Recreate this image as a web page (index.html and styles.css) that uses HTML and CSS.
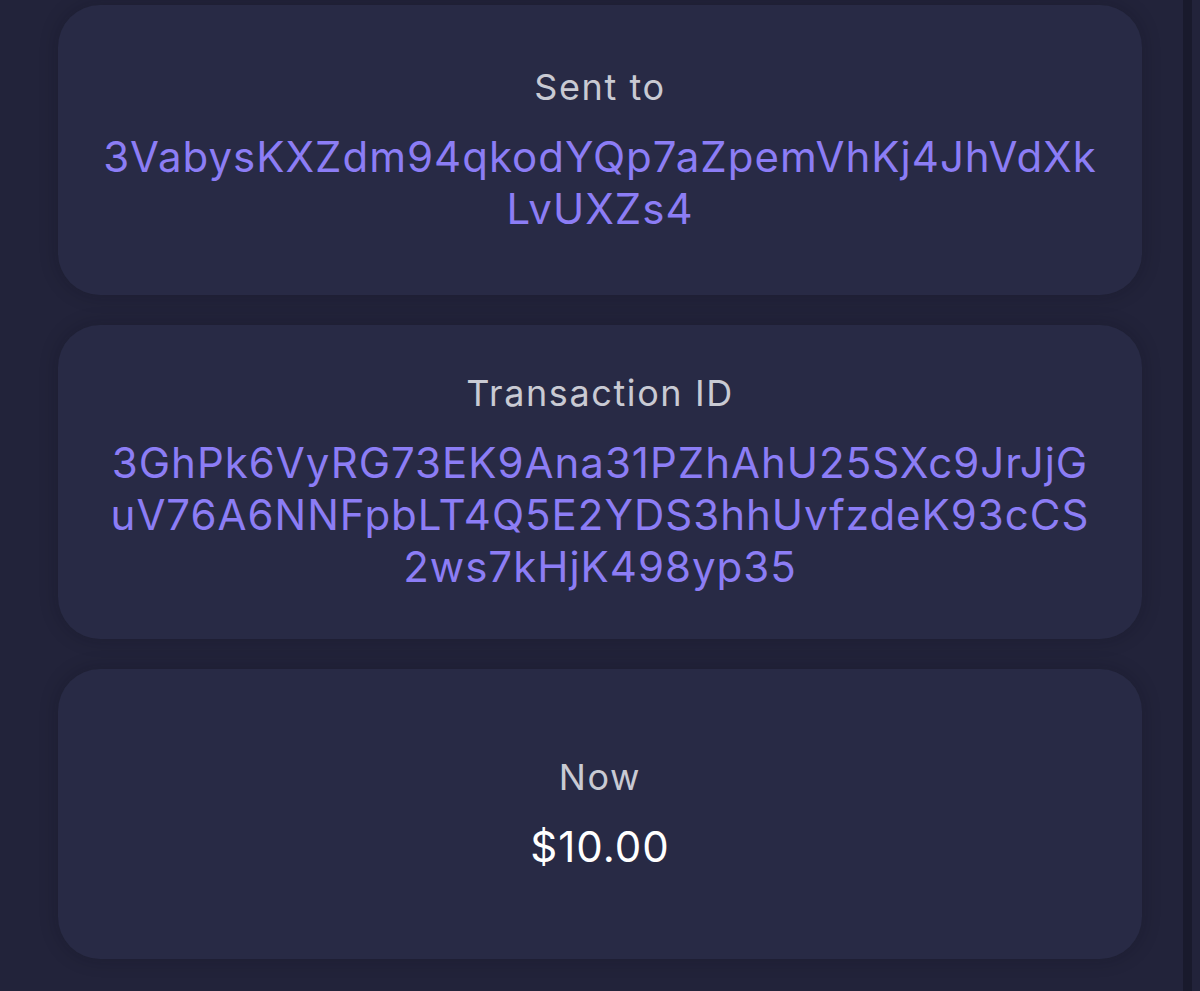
FILE: index.html
```html
<!DOCTYPE html>
<html lang="en">
<head>
<meta charset="utf-8">
<title>Transaction details</title>
<link rel="stylesheet" href="styles.css">
</head>
<body>
<div class="page">
  <main class="details">
    <section class="card">
      <div class="label">Sent to</div>
      <div class="value link">3VabysKXZdm94qkodYQp7aZpemVhKj4JhVdXk<br>LvUXZs4</div>
    </section>
    <section class="card">
      <div class="label">Transaction ID</div>
      <div class="value link">3GhPk6VyRG73EK9Ana31PZhAhU25SXc9JrJjG<br>uV76A6NNFpbLT4Q5E2YDS3hhUvfzdeK93cCS<br>2ws7kHjK498yp35</div>
    </section>
    <section class="card">
      <div class="label">Now</div>
      <div class="value amount">$10.00</div>
    </section>
  </main>
  <div class="edge"></div>
  <div class="edge-right"></div>
</div>
</body>
</html>
```
FILE: styles.css
```css
html, body {
  margin: 0;
  padding: 0;
  background: #22233a;
  height: 100%;
}
body {
  font-family: Inter, "Noto Sans", "Liberation Sans", sans-serif;
  -webkit-font-smoothing: antialiased;
}
.page {
  display: grid;
  grid-template-columns: 1fr 9px 8px;
  min-height: 991px;
  overflow: hidden;
}
.details {
  display: flex;
  flex-direction: column;
  gap: 30px;
  padding: 5px 41px 0 58px;
}
.card {
  box-sizing: border-box;
  min-height: 290px;
  padding: 46px 10px;
  background: #282a45;
  border-radius: 42px;
  box-shadow: 0 0 18px rgba(10, 10, 25, 0.25);
  display: flex;
  flex-direction: column;
  justify-content: center;
  align-items: center;
  text-align: center;
  gap: 22px;
}
.label {
  font-size: 36px;
  line-height: 44px;
  letter-spacing: 1.6px;
  color: #c9cad3;
}
.value {
  font-size: 42px;
  line-height: 52px;
  letter-spacing: 1px;
}
.link {
  color: #8c7df5;
}
.amount {
  color: #ffffff;
}
.edge {
  background: #191a2c;
}
.edge-right {
  background: #22233a;
}
```
